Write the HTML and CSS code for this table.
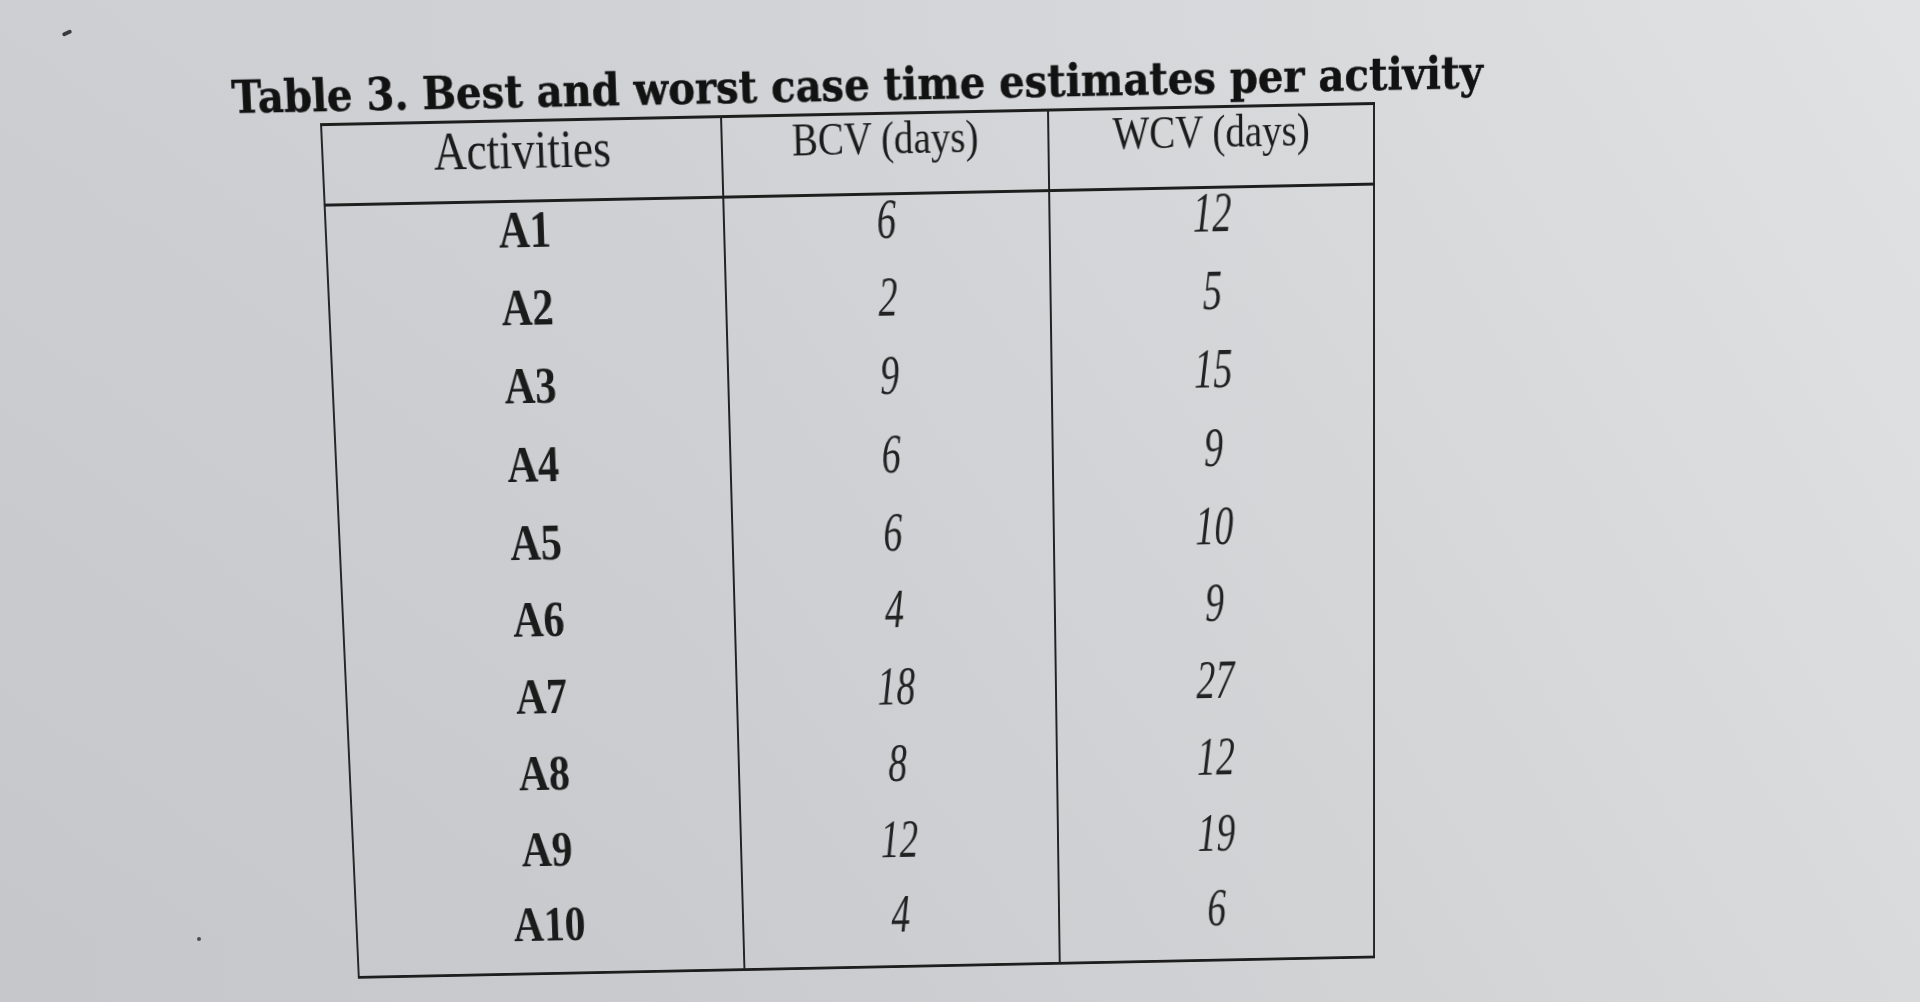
FILE: index.html
```html
<!DOCTYPE html>
<html lang="en">
<head>
<meta charset="utf-8">
<title>Table 3</title>
<link rel="stylesheet" href="styles.css">
</head>
<body>
<figure class="fig">
  <div class="caption"><span class="cap-text">Table 3. Best and worst case time estimates per activity</span></div>
  <table class="est">
    <thead>
      <tr class="head">
        <th class="c1 h1"><span class="n h-act">Activities</span></th>
        <th class="c2"><span class="n">BCV (days)</span></th>
        <th class="c3"><span class="n">WCV (days)</span></th>
      </tr>
    </thead>
    <tbody>
      <tr class="row"><td class="lab"><span class="n">A1</span></td><td class="num c2"><span class="d">6</span></td><td class="num c3"><span class="d">12</span></td></tr>
      <tr class="row"><td class="lab"><span class="n">A2</span></td><td class="num c2"><span class="d">2</span></td><td class="num c3"><span class="d">5</span></td></tr>
      <tr class="row"><td class="lab"><span class="n">A3</span></td><td class="num c2"><span class="d">9</span></td><td class="num c3"><span class="d">15</span></td></tr>
      <tr class="row"><td class="lab"><span class="n">A4</span></td><td class="num c2"><span class="d">6</span></td><td class="num c3"><span class="d">9</span></td></tr>
      <tr class="row"><td class="lab"><span class="n">A5</span></td><td class="num c2"><span class="d">6</span></td><td class="num c3"><span class="d">10</span></td></tr>
      <tr class="row"><td class="lab"><span class="n">A6</span></td><td class="num c2"><span class="d">4</span></td><td class="num c3"><span class="d">9</span></td></tr>
      <tr class="row"><td class="lab"><span class="n">A7</span></td><td class="num c2"><span class="d">18</span></td><td class="num c3"><span class="d">27</span></td></tr>
      <tr class="row"><td class="lab"><span class="n">A8</span></td><td class="num c2"><span class="d">8</span></td><td class="num c3"><span class="d">12</span></td></tr>
      <tr class="row"><td class="lab"><span class="n">A9</span></td><td class="num c2"><span class="d">12</span></td><td class="num c3"><span class="d">19</span></td></tr>
      <tr class="row last"><td class="lab"><span class="n">A10</span></td><td class="num c2"><span class="d">4</span></td><td class="num c3"><span class="d">6</span></td></tr>
    </tbody>
  </table>
</figure>
</body>
</html>
```

FILE: styles.css
```css
html, body {
  margin: 0;
  height: 100%;
}

body {
  box-sizing: border-box;
  padding-top: 51px;
  overflow: hidden;
  position: relative;
  font-family: "Liberation Serif", "Times New Roman", serif;
  color: #1b1b1b;
  background:
    linear-gradient(180deg, rgba(255,255,255,0.03) 0%, rgba(0,0,0,0.03) 100%),
    linear-gradient(90deg, #cbcdd0 0%, #cfd1d4 35%, #d7d9db 70%, #e0e1e3 100%);
}

body::before {
  content: "";
  position: absolute;
  left: 62px;
  top: 31px;
  width: 10px;
  height: 4px;
  border-radius: 2px;
  background: #3a3b3d;
  transform: rotate(-25deg);
}

body::after {
  content: "";
  position: absolute;
  left: 197px;
  top: 937px;
  width: 4px;
  height: 4px;
  border-radius: 50%;
  background: #4a4c4f;
}

.fig {
  margin: 0 0 0 233px;
  width: 1300px;
  transform-origin: 1142px 51px;
  transform: skewY(-1.15deg) perspective(1500px) rotateX(-3.6deg);
}

.caption {
  height: 47px;
  margin-bottom: 4px;
  font-family: "DejaVu Serif", serif;
  font-weight: bold;
  font-size: 44px;
  line-height: 47px;
  white-space: nowrap;
  color: #121212;
  -webkit-text-stroke: 0.5px #121212;
}

.cap-text {
  display: inline-block;
  transform-origin: 0 50%;
  transform: scaleX(0.91);
}

.est {
  margin-left: 87px;
  width: 1047px;
  table-layout: fixed;
  border-collapse: collapse;
  border-top: 3px solid #1e1e1e;
  border-bottom: 3px solid #1e1e1e;
  border-left: 2px solid #262626;
  border-right: 2px solid #262626;
}

.c1 { width: 398px; }
.c2 { width: 325px; border-left: 2px solid #222; }
.c3 { width: 324px; border-left: 2px solid #222; }

.head {
  height: 80.5px;
}

th {
  padding: 0;
  vertical-align: top;
  text-align: center;
  font-weight: normal;
  font-size: 47px;
  line-height: 1;
  border-bottom: 3px solid #1e1e1e;
  white-space: nowrap;
}

.h-act {
  font-size: 55px;
}

.row {
  height: 80.7px;
}

td {
  padding: 0;
  vertical-align: top;
  text-align: center;
  line-height: 1;
}

.lab {
  padding-top: 2px;
  font-weight: bold;
  font-size: 52px;
}

.num {
  padding-top: 1px;
  font-style: italic;
  font-size: 57px;
  line-height: 46px;
  color: #222;
}

.n {
  display: inline-block;
  transform: scaleX(0.83);
}

.d {
  display: inline-block;
  transform: scaleX(0.68);
}
```
